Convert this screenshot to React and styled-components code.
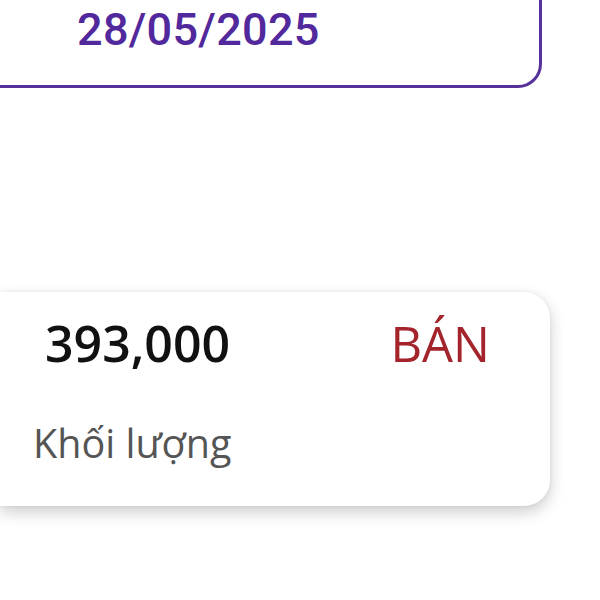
import React from 'react';
import styled, { createGlobalStyle } from 'styled-components';

const GlobalStyle = createGlobalStyle`
  html, body {
    margin: 0;
    padding: 0;
    background: #ffffff;
    overflow: hidden;
  }
  body {
    font-family: "Open Sans", "Noto Sans", sans-serif;
  }
`;

const Screen = styled.div`
  width: 600px;
  height: 600px;
  display: flex;
  flex-direction: column;
  background: #ffffff;
`;

const DateBox = styled.div`
  box-sizing: border-box;
  width: 542px;
  height: 88px;
  border-right: 3px solid #553199;
  border-bottom: 3px solid #553199;
  border-bottom-right-radius: 24px;
  padding-left: 77px;
  display: flex;
  align-items: flex-start;
`;

const DateText = styled.span`
  font-family: Roboto, "Liberation Sans", sans-serif;
  font-weight: 500;
  font-size: 45px;
  line-height: 1;
  margin-top: 7px;
  color: #52299c;
  letter-spacing: 0.3px;
`;

const Card = styled.div`
  box-sizing: border-box;
  width: 550px;
  height: 214px;
  margin-top: 204px;
  background: #ffffff;
  border-radius: 0 26px 26px 0;
  box-shadow: 0 6px 16px rgba(0, 0, 0, 0.2), 0 0 4px rgba(0, 0, 0, 0.06);
  padding: 21px 60px 0 45px;
  display: flex;
  flex-direction: column;
`;

const Row = styled.div`
  display: flex;
  justify-content: space-between;
  align-items: baseline;
`;

const Price = styled.span`
  font-size: 50px;
  font-weight: 600;
  line-height: 1.2;
  color: #111111;
`;

const Side = styled.span`
  font-size: 49px;
  font-weight: 400;
  line-height: 1.2;
  color: ${props => (props.$type === 'sell' ? '#a3242b' : '#1d8a3c')};
`;

const Label = styled.span`
  font-size: 39.5px;
  font-weight: 400;
  line-height: 1.2;
  color: #555555;
  margin-top: 47px;
  margin-left: -12px;
`;

export default function App() {
  return (
    <Screen>
      <GlobalStyle />
      <DateBox>
        <DateText>28/05/2025</DateText>
      </DateBox>
      <Card>
        <Row>
          <Price>393,000</Price>
          <Side $type="sell">BÁN</Side>
        </Row>
        <Label>Khối lượng</Label>
      </Card>
    </Screen>
  );
}
